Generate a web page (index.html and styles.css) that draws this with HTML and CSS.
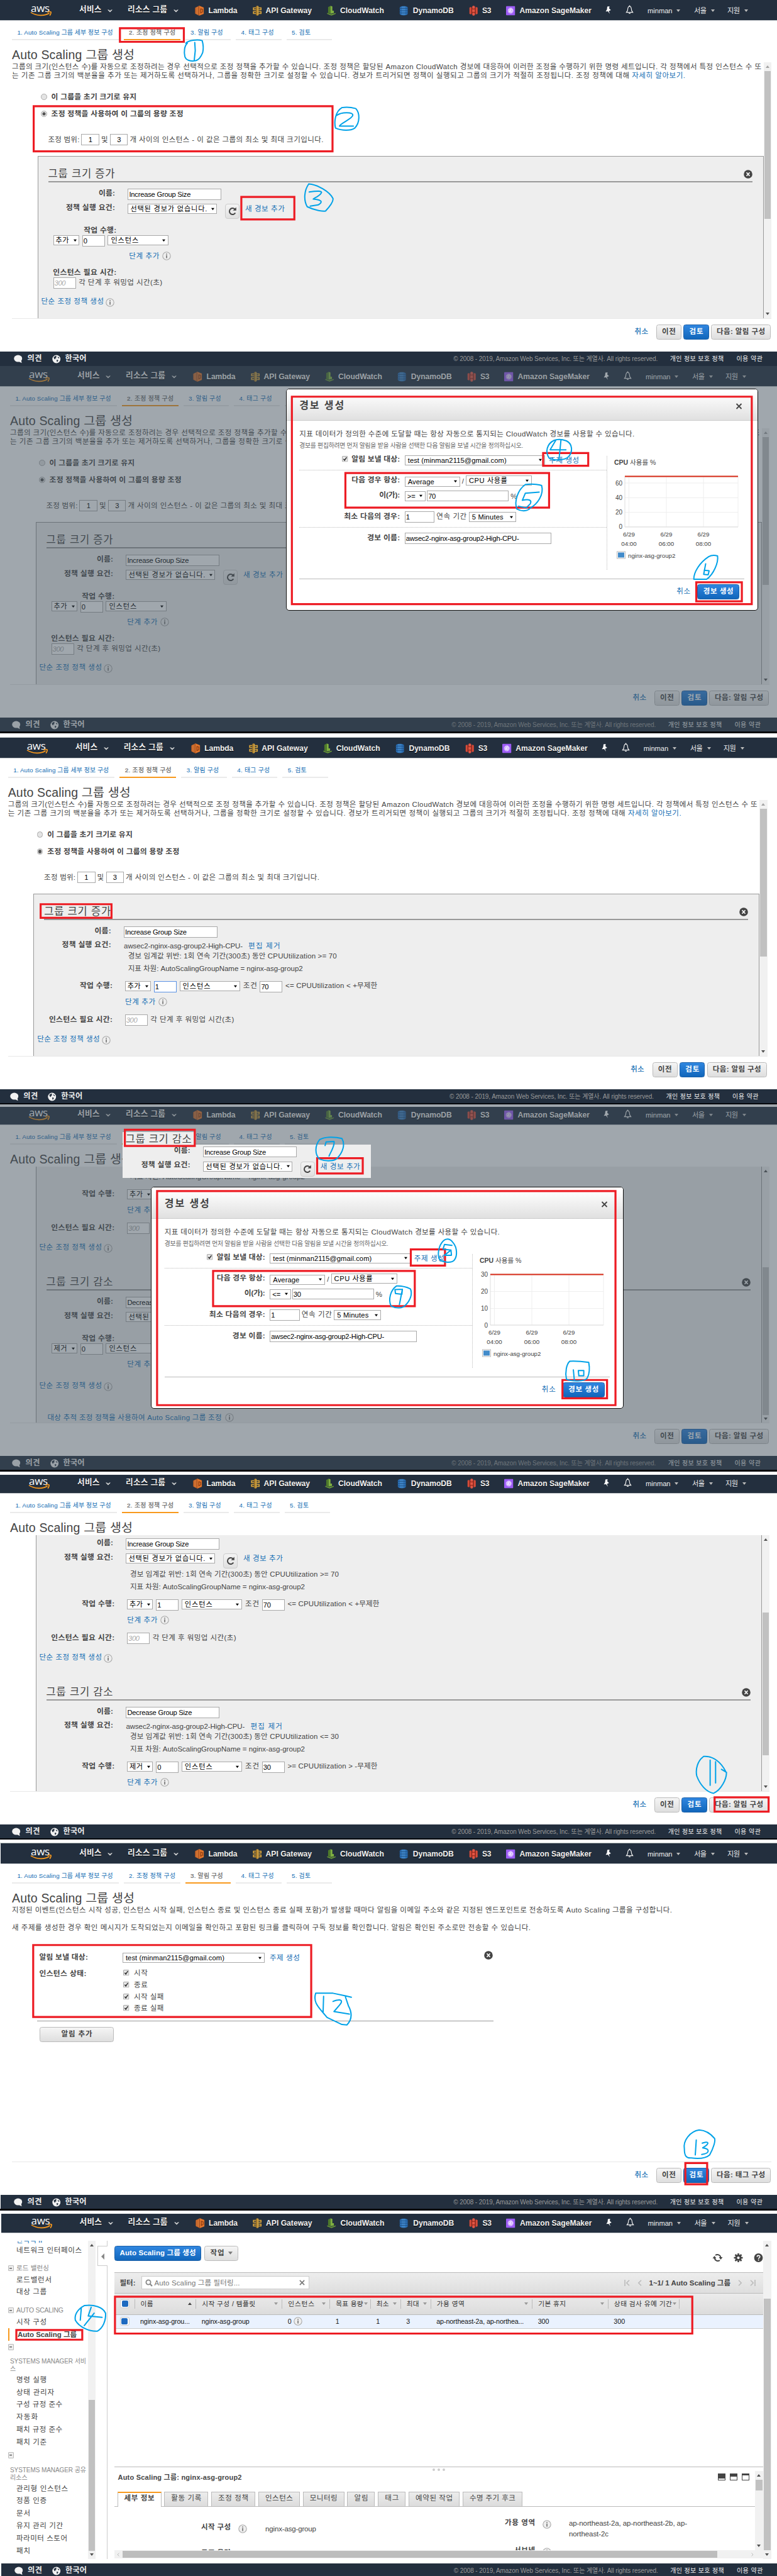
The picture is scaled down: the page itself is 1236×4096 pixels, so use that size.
FILE: index.html
```html
<!DOCTYPE html>
<html lang="ko">
<head>
<meta charset="utf-8">
<title>Auto Scaling 그룹 생성</title>
<link rel="stylesheet" href="styles.css">
</head>
<body>
<svg width="0" height="0" class="defs">
  <symbol id="i-aws" viewBox="0 0 34 20"><path d="M1 13.600c9 6 22 6.400 29.500 1.200M27 13.200c2.500-.7 5-.8 5.900-.2.600.9-.3 4-1.900 5.600" fill="none" stroke="#f8991d" stroke-width="1.700"/></symbol>
  <symbol id="i-caret" viewBox="0 0 8 5"><path d="M0 .6h2.200L4 2.300 5.800.6H8L4 4.600z" fill="#ddd"/></symbol>
  <symbol id="i-tri" viewBox="0 0 6 4"><path d="M0 0h6L3 4z" fill="currentColor"/></symbol>
  <symbol id="i-up" viewBox="0 0 6 4"><path d="M0 4h6L3 0z" fill="currentColor"/></symbol>
  <symbol id="i-lambda" viewBox="0 0 14 16"><path d="M0 3.500 6.500 0v16L0 12.500z" fill="#b85a22"/><path d="M6.500 0 14 3v10l-7.500 3z" fill="#e0742b"/><path d="M2 2.500v11M4.300 2v12.300" stroke="#f09048" stroke-width=".8"/><path d="M9 5v6.500l3-1.500V6z" fill="none" stroke="#8a3c12" stroke-width="1.200"/></symbol>
  <symbol id="i-api" viewBox="0 0 14 16"><path d="M5 1l2-1v16l-2-1z" fill="#a97a25"/><path d="M7 0l2 1v14l-2 1z" fill="#e0ac42"/><path d="M5 3.500H1v3h4M5 9.500H1v3h4M9 3.500h4v3H9M9 9.500h4v3H9" fill="none" stroke="#d9a43a" stroke-width="1.700"/></symbol>
  <symbol id="i-cw" viewBox="0 0 15 16"><path d="M2 2l4-2v13l-4-1z" fill="#4e7a2a"/><path d="M6 0l3 1v7h2.500v4L6 13z" fill="#7fb041"/><path d="M0 11.500 7 14l8-2.500-1 2L7.500 16 .8 13.500z" fill="#6b9b37"/></symbol>
  <symbol id="i-ddb" viewBox="0 0 15 16"><path d="M1 2.500C3 0 12 0 14 2.500v11c-2 3-11 3-13 0z" fill="#2b6fb5"/><path d="M4 1h6v14H4z" fill="#4f95d6" opacity=".55"/><path d="M0 4.200h15M0 8h15M0 11.800h15" stroke="#1c4a7d" stroke-width=".9"/></symbol>
  <symbol id="i-s3" viewBox="0 0 13 16"><path d="M0 3l3-1v12l-3-1zM13 3l-3-1v12l3-1z" fill="#d84b38"/><path d="M3 3l3.500 1L10 3v10l-3.500-1L3 13z" fill="#9c2d20"/><path d="M4.500 1l2-1 2.200 1v3l-2.200 1-2-1zM4.500 12l2-1 2.200 1v3l-2.200 1-2-1zM4.500 6h4v4h-4z" fill="#e25644"/></symbol>
  <symbol id="i-sm" viewBox="0 0 15 15"><rect width="15" height="15" rx="1" fill="#9d5cf5"/><circle cx="7.500" cy="7.500" r="4.800" fill="#cda9ff"/><path d="M4 6c2-3 3 1 3.500 2S10 10 11 7M5 10c1-3 3 1 4 1M8 3v4M4.500 8H7M9 5l2 1" stroke="#fff" fill="none" stroke-width=".9"/></symbol>
  <symbol id="i-pin" viewBox="0 0 9 13"><path d="M3 .5 6.500 0 6 3.500 8.800 6 5.500 7.500 7 12 4 8 .5 8.300 2.500 5z" fill="#fff"/></symbol>
  <symbol id="i-bell" viewBox="0 0 14 16"><path d="M7 1.500C3.500 2 4 6.500 3.500 9L1.500 12h11l-2-3C10 6.500 10.500 2 7 1.500z" fill="none" stroke="#eee" stroke-width="1.300"/><path d="M5.500 13h3v1.500h-3zM6.300 0h1.400v2H6.300z" fill="#eee"/></symbol>
  <symbol id="i-bubble" viewBox="0 0 14 14"><ellipse cx="7" cy="6" rx="6.800" ry="5.700" fill="#f2f2f2"/><path d="M7.500 10.500 13 13.500 12 8z" fill="#f2f2f2"/></symbol>
  <symbol id="i-globe" viewBox="0 0 14 14"><circle cx="7" cy="7" r="6.700" fill="#f2f2f2"/><path d="M2.500 3.500 6 1.500l1.500 1.200-1.200 1 .6 1.700-2 .2.300 1.800-2-1zM9 2.500l2.800 2.300-.3 1.200-2-1zM7.200 8l2.800.6-.5 2L7.800 12l-.2-2z" fill="#232f3e"/></symbol>
  <symbol id="i-info" viewBox="0 0 14 14"><circle cx="7" cy="7" r="6.200" fill="#eee" stroke="#aaa" stroke-width="1.100"/><path d="M6.300 3.200h1.500v1.500H6.300zM6.300 5.700h1.500v4.800H6.300z" fill="#666"/></symbol>
  <symbol id="i-close" viewBox="0 0 14 14"><circle cx="7" cy="7" r="6.800" fill="#444"/><path d="M4.500 4.200l5 5.600M9.500 4.200l-5 5.600" stroke="#fff" stroke-width="1.700"/></symbol>
  <symbol id="i-reload" viewBox="0 0 16 16"><path d="M12.300 10.500A5 5 0 1 1 11.500 4.500" fill="none" stroke="#444" stroke-width="2"/><path d="M13.800 1.500v5.300H8.500z" fill="#444"/></symbol>
  <symbol id="i-sync" viewBox="0 0 16 14"><path d="M4.500 3A5.500 5.500 0 0 1 13 6.500M11.500 11A5.500 5.500 0 0 1 3 7.500" fill="none" stroke="#444" stroke-width="1.900"/><path d="M10 6h6l-3 4zM0 8h6L3 4z" fill="#444"/></symbol>
  <symbol id="i-gear" viewBox="0 0 14 14"><circle cx="7" cy="7" r="3.600" fill="none" stroke="#444" stroke-width="3"/><path d="M7 0v2.500M7 11.500V14M0 7h2.500M11.500 7H14M2 2l2 2M10 10l2 2M12 2l-2 2M4 10l-2 2" stroke="#444" stroke-width="2.600"/></symbol>
  <symbol id="i-help" viewBox="0 0 14 14"><circle cx="7" cy="7" r="6.900" fill="#444"/><path d="M4.800 5.600C4.800 2.600 9.300 2.700 9.300 5.300 9.300 7 7.100 6.700 7.100 8.700M7.100 9.800v1.800" fill="none" stroke="#fff" stroke-width="1.600"/></symbol>
  <symbol id="i-check" viewBox="0 0 9 9"><rect x=".5" y=".5" width="8" height="8" rx="1" fill="#e8e8e8" stroke="#aaa"/><path d="M2.200 4.500 3.900 6.500 7 2" fill="none" stroke="#333" stroke-width="1.500"/></symbol>
  <symbol id="i-x" viewBox="0 0 10 10"><path d="M1 1l8 8M9 1L1 9" stroke="currentColor" stroke-width="1.800"/></symbol>
  <symbol id="i-search" viewBox="0 0 12 12"><circle cx="5" cy="5" r="3.600" fill="none" stroke="#888" stroke-width="1.800"/><path d="M7.500 7.500 11 11" stroke="#888" stroke-width="2.200"/></symbol>
  <symbol id="i-first" viewBox="0 0 9 10"><path d="M1 0v10M8 .8 3.800 5 8 9.200" fill="none" stroke="#bbb" stroke-width="1.600"/></symbol>
  <symbol id="i-prev" viewBox="0 0 9 10"><path d="M7 .8 2.800 5 7 9.200" fill="none" stroke="#bbb" stroke-width="1.600"/></symbol>
</svg>

<template id="nav">
  <header class="nav">
    <span class="logo"><b>aws</b><svg><use href="#i-aws"/></svg></span>
    <b class="svc" data-w="35.5">서비스</b><svg class="caret"><use href="#i-caret"/></svg>
    <b class="svc" data-w="63">리소스 그룹</b><svg class="caret"><use href="#i-caret"/></svg>
    <svg class="ico"><use href="#i-lambda"/></svg><b data-w="46">Lambda</b>
    <svg class="ico"><use href="#i-api"/></svg><b data-w="73.5">API Gateway</b>
    <svg class="ico"><use href="#i-cw"/></svg><b data-w="70">CloudWatch</b>
    <svg class="ico"><use href="#i-ddb"/></svg><b data-w="65">DynamoDB</b>
    <svg class="ico"><use href="#i-s3"/></svg><b data-w="14.5">S3</b>
    <svg class="ico"><use href="#i-sm"/></svg><b data-w="114.5">Amazon SageMaker</b>
    <svg class="pin"><use href="#i-pin"/></svg>
    <svg class="bell"><use href="#i-bell"/></svg>
    <span data-w="39.5">minman</span><svg class="tri"><use href="#i-tri"/></svg>
    <span data-w="20">서울</span><svg class="tri"><use href="#i-tri"/></svg>
    <span data-w="20">지원</span><svg class="tri"><use href="#i-tri"/></svg>
  </header>
</template>

<template id="foot">
  <footer class="foot">
    <svg><use href="#i-bubble"/></svg><b data-w="23">의견</b>
    <svg><use href="#i-globe"/></svg><b data-w="34">한국어</b>
    <span class="copy" data-w="325">© 2008 - 2019, Amazon Web Services, Inc. 또는 계열사. All rights reserved.</span>
    <span data-w="85.5">개인 정보 보호 정책</span>
    <span data-w="41.5">이용 약관</span>
  </footer>
</template>

<template id="steps">
  <nav class="steps on{{on}}">
    <a><span data-w="152">1. Auto Scaling 그룹 세부 정보 구성</span></a>
    <a><span data-w="74">2. 조정 정책 구성</span></a>
    <a><span data-w="51.5">3. 알림 구성</span></a>
    <a><span data-w="52">4. 태그 구성</span></a>
    <a><span data-w="30">5. 검토</span></a>
  </nav>
  <h1><span data-w="195">Auto Scaling 그룹 생성</span></h1>
</template>

<template id="intro">
  <p class="desc"><span data-w="1192">그룹의 크기(인스턴스 수)를 자동으로 조정하려는 경우 선택적으로 조정 정책을 추가할 수 있습니다. 조정 정책은 할당된 Amazon CloudWatch 경보에 대응하여 이러한 조정을 수행하기 위한 명령 세트입니다. 각 정책에서 특정 인스턴스 수 또</span><br><span data-w="1071">는 기존 그룹 크기의 백분율을 추가 또는 제거하도록 선택하거나, 그룹을 정확한 크기로 설정할 수 있습니다. 경보가 트리거되면 정책이 실행되고 그룹의 크기가 적절히 조정됩니다. 조정 정책에 대해 <a>자세히 알아보기.</a></span></p>
  <div class="opt"><i class="radio"></i><b data-w="135.5">이 그룹을 초기 크기로 유지</b></div>
  <div class="opt"><i class="radio on"></i><b data-w="210">조정 정책을 사용하여 이 그룹의 용량 조정</b></div>
  <div class="range"><span data-w="50">조정 범위:</span><i class="inp num">1</i><span data-w="11">및</span><i class="inp num">3</i><span data-w="308">개 사이의 인스턴스 - 이 값은 그룹의 최소 및 최대 크기입니다.</span></div>
</template>

<template id="heading"><div class="ghead"><span data-w="106">그룹 크기 {{t}}</span><svg class="close"><use href="#i-close"/></svg></div></template>
<template id="name"><div class="row name"><b class="lb"><span data-w="26">이름:</span></b><i class="inp wide"><span data-w="{{w}}">{{t}}</span></i></div></template>
<template id="alarmsel"><div class="row alarmsel"><b class="lb"><span data-w="78">정책 실행 요건:</span></b><i class="sel cond"><span data-w="122">선택된 경보가 없습니다.</span><svg><use href="#i-tri"/></svg></i><i class="rbtn"><svg><use href="#i-reload"/></svg></i><a data-w="63">새 경보 추가</a></div></template>
<template id="alarmtxt"><div class="row alarmtxt"><b class="lb"><span data-w="78">정책 실행 요건:</span></b><span data-w="189">awsec2-nginx-asg-group2-High-CPU-</span><a class="g8" data-w="22.500">편집</a><a data-w="22.500">제거</a></div></template>
<template id="viol"><div class="row viol"><span data-w="332">경보 임계값 위반: 1회 연속 기간(300초) 동안 CPUUtilization {{t}}</span></div></template>
<template id="dim"><div class="row dim"><span data-w="278">지표 차원: AutoScalingGroupName = nginx-asg-group2</span></div></template>
<template id="act"><div class="row act {{c}}"><b class="lb x2"><span data-w="52">작업 수행:</span></b><i class="sel op"><span data-w="21">{{op}}</span><svg><use href="#i-tri"/></svg></i><i class="inp n2">{{n}}</i><i class="sel unit"><span data-w="44">인스턴스</span><svg><use href="#i-tri"/></svg></i><span class="up" data-w="22">조건</span><i class="inp n2">{{v}}</i><span class="up" data-w="{{w}}">{{t}}</span></div></template>
<template id="actmin"><div class="row actlab"><b class="lb x2"><span data-w="52">작업 수행:</span></b></div><div class="row actmin"><i class="sel op"><span data-w="21">{{op}}</span><svg><use href="#i-tri"/></svg></i><i class="inp n2">0</i><i class="sel unit"><span data-w="44">인스턴스</span><svg><use href="#i-tri"/></svg></i></div></template>
<template id="step"><div class="row step {{c}}"><a data-w="48">단계 추가</a><svg class="info"><use href="#i-info"/></svg></div></template>
<template id="warm"><div class="row warm"><b class="lb x2"><span data-w="101">인스턴스 필요 시간:</span></b><i class="inp n2 ph">300</i><span class="up" data-w="133">각 단계 후 워밍업 시간(초)</span></div></template>
<template id="simple"><div class="row simple {{c}}"><a data-w="99.5">단순 조정 정책 생성</a><svg class="info"><use href="#i-info"/></svg></div></template>
<template id="bar"><div class="vbar {{c}}"><svg><use href="#i-up"/></svg><i></i><svg><use href="#i-tri"/></svg></div></template>
<template id="actions"><div class="actions"><a data-w="21.500">취소</a><i class="btn"><span data-w="22">이전</span></i><i class="btn blue"><span data-w="22">검토</span></i><i class="btn next"><span data-w="77">다음: {{t}} 구성</span></i></div></template>

<template id="wizard">
  <div data-use="nav"></div>
  <main class="body">
    <div data-use="steps" data-on="2"></div>
    <div class="pane"><div class="scroll">
      <div data-use="intro"></div>
      <div class="group">
        <div data-use="heading" data-t="증가"></div>
        <div data-use="name" data-t="Increase Group Size" data-w="98"></div>
        <div data-use="alarmsel"></div>
        <div data-use="actmin" data-op="추가"></div>
        <div data-use="step" data-c="tall"></div>
        <div class="row warmlab"><b class="lb x2"><span data-w="101">인스턴스 필요 시간:</span></b></div>
        <div class="row warmmin"><i class="inp n2 ph">300</i><span class="up" data-w="133">각 단계 후 워밍업 시간(초)</span></div>
        <div data-use="simple" data-c="tall"></div>
      </div>
    </div><div data-use="bar" data-c="top"></div></div>
    <div data-use="actions" data-t="알림"></div>
  </main>
  <div data-use="foot"></div>
</template>

<template id="dialog">
  <div class="dialog {{c}}">
    <div class="dhead"><b data-w="71">경보 생성</b><svg><use href="#i-x"/></svg></div>
    <p class="p1"><span data-w="533">지표 데이터가 정의한 수준에 도달할 때는 항상 자동으로 통지되는 CloudWatch 경보를 사용할 수 있습니다.</span></p>
    <p class="p2"><span data-w="356">경보를 편집하려면 먼저 알림을 받을 사람을 선택한 다음 알림을 보낼 시간을 정의하십시오.</span></p>
    <div class="dgrid">
      <div class="dform">
        <div class="dr d1"><b class="dl"><svg class="chk"><use href="#i-check"/></svg><span data-w="77">알림 보낼 대상:</span></b><i class="sel topic"><span data-w="157">test (minman2115@gmail.com)</span><svg><use href="#i-tri"/></svg></i><a data-w="48">주제 생성</a></div>
        <div class="dr d2"><b class="dl"><span data-w="77">다음 경우 항상:</span></b><i class="sel avg"><span data-w="42">Average</span><svg><use href="#i-tri"/></svg></i><span>/</span><i class="sel cpu"><span data-w="61">CPU 사용률</span><svg><use href="#i-tri"/></svg></i></div>
        <div class="dr d3"><b class="dl"><span data-w="33">이(가):</span></b><i class="sel cmp"><span>{{op}}</span><svg><use href="#i-tri"/></svg></i><i class="inp val">{{v}}</i><span class="pct">%</span></div>
        <div class="dr d4"><b class="dl"><span data-w="89">최소 다음의 경우:</span></b><i class="inp per">1</i><span class="up" data-w="48">연속 기간</span><i class="sel min5"><span data-w="50">5 Minutes</span><svg><use href="#i-tri"/></svg></i></div>
        <div class="dr d5"><b class="dl"><span data-w="52">경보 이름:</span></b><i class="inp aname"><span data-w="180">awsec2-nginx-asg-group2-High-CPU-</span></i></div>
      </div>
      <svg class="chart" width="218" height="180">
        <text x="11" y="14" class="ct">CPU <tspan class="ctr">사용률 %</tspan></text>
        <path d="{{grid}}M34.500 32V113M94 32V113M153 32V113M208 32V113" class="grid"/>
        <path d="M28 32V113H208" class="axis"/>
        <path d="M28 32.500H208" class="lim2"/><path d="M28 32.500H208" class="lim"/>
        {{ticks}}
        <g class="xl"><text x="34.500" y="128">6/29</text><text x="94" y="128">6/29</text><text x="153" y="128">6/29</text><text x="34.500" y="143">04:00</text><text x="94" y="143">06:00</text><text x="153" y="143">08:00</text></g>
        <rect x="15.500" y="152" width="13" height="11" fill="#fff" stroke="#bbb"/><rect x="17" y="153.500" width="10" height="8" fill="#428bca"/>
        <text x="33" y="161.500" class="lg">nginx-asg-group2</text>
      </svg>
    </div>
    <div class="dfoot"><a data-w="22">취소</a><i class="btn blue"><span data-w="48">경보 생성</span></i></div>
  </div>
</template>

<section class="shot s1"><div data-use="wizard"></div></section>

<section class="shot s2">
  <div data-use="wizard"></div>
  <div class="shade"></div>
  <div data-use="dialog" data-c="d-right" data-op="&gt;=" data-v="70" data-ticks="60:43,40:66.5,20:89.5,0:112.5"></div>
</section>
<div class="strip st2"></div>

<section class="shot s3">
  <div data-use="nav"></div>
  <main class="body">
    <div data-use="steps" data-on="2"></div>
    <div class="pane"><div class="scroll">
      <div data-use="intro"></div>
      <div class="group">
        <div data-use="heading" data-t="증가"></div>
        <div data-use="name" data-t="Increase Group Size" data-w="98"></div>
        <div data-use="alarmtxt"></div>
        <div data-use="viol" data-t="&gt;= 70"></div>
        <div data-use="dim"></div>
        <div data-use="act" data-c="focus" data-op="추가" data-n="1" data-v="70" data-t="&lt;= CPUUtilization &lt; +무제한" data-w="146"></div>
        <div data-use="step"></div>
        <div data-use="warm"></div>
        <div data-use="simple"></div>
      </div>
    </div><div data-use="bar" data-c="top"></div></div>
    <div data-use="actions" data-t="알림"></div>
  </main>
  <div data-use="foot"></div>
</section>
<div class="strip st3"></div>

<section class="shot s4">
  <div data-use="nav"></div>
  <main class="body">
    <div data-use="steps" data-on="2"></div>
    <div class="pane"><div class="scroll">
      <div class="group cut">
        <div data-use="dim"></div>
        <div data-use="act" data-op="추가" data-n="1" data-v="70" data-t="&lt;= CPUUtilization &lt; +무제한" data-w="146"></div>
        <div data-use="step"></div>
        <div data-use="warm"></div>
        <div data-use="simple"></div>
        <div data-use="heading" data-t="감소"></div>
        <div data-use="name" data-t="Decrease Group Size" data-w="104"></div>
        <div data-use="alarmsel"></div>
        <div data-use="actmin" data-op="제거"></div>
        <div data-use="step" data-c="tall"></div>
        <div data-use="simple" data-c="mid"></div>
        <div class="row target"><a data-w="277">대상 추적 조정 정책을 사용하여 Auto Scaling 그룹 조정</a><svg class="info"><use href="#i-info"/></svg></div>
      </div>
    </div><div data-use="bar" data-c="low"></div></div>
    <div data-use="actions" data-t="알림"></div>
  </main>
  <div data-use="foot"></div>
  <div class="shade"></div>
  <div class="patch">
    <div class="phead"><span data-w="105">그룹 크기 감소</span></div>
    <div class="pbody">
      <div data-use="name" data-t="Increase Group Size" data-w="98"></div>
      <div data-use="alarmsel"></div>
    </div>
  </div>
  <div data-use="dialog" data-c="d-mid" data-op="&lt;=" data-v="30" data-ticks="30:32.5,20:59.5,10:86.5,0:113"></div>
</section>
<div class="strip st4"></div>

<section class="shot s5">
  <div data-use="nav"></div>
  <main class="body">
    <div data-use="steps" data-on="2"></div>
    <div class="pane"><div class="scroll">
      <div class="group cut">
        <div data-use="name" data-t="Increase Group Size" data-w="98"></div>
        <div data-use="alarmsel"></div>
        <div data-use="viol" data-t="&gt;= 70"></div>
        <div data-use="dim"></div>
        <div data-use="act" data-op="추가" data-n="1" data-v="70" data-t="&lt;= CPUUtilization &lt; +무제한" data-w="146"></div>
        <div data-use="step"></div>
        <div data-use="warm"></div>
        <div data-use="simple"></div>
        <div data-use="heading" data-t="감소"></div>
        <div data-use="name" data-t="Decrease Group Size" data-w="103"></div>
        <div data-use="alarmtxt"></div>
        <div data-use="viol" data-t="&lt;= 30"></div>
        <div data-use="dim"></div>
        <div data-use="act" data-op="제거" data-n="0" data-v="30" data-t="&gt;= CPUUtilization &gt; -무제한" data-w="143"></div>
        <div data-use="step"></div>
      </div>
    </div><div data-use="bar" data-c="center"></div></div>
    <div data-use="actions" data-t="알림"></div>
  </main>
  <div data-use="foot"></div>
</section>
<div class="strip st5"></div>

<section class="shot s6">
  <div data-use="nav"></div>
  <main class="body">
    <div data-use="steps" data-on="3"></div>
    <div class="pane notify">
      <p class="desc"><span data-w="1050">지정된 이벤트(인스턴스 시작 성공, 인스턴스 시작 실패, 인스턴스 종료 및 인스턴스 종료 실패 포함)가 발생할 때마다 알림을 이메일 주소와 같은 지정된 엔드포인트로 전송하도록 Auto Scaling 그룹을 구성합니다.</span></p>
      <p class="desc"><span data-w="825">새 주제를 생성한 경우 확인 메시지가 도착되었는지 이메일을 확인하고 포함된 링크를 클릭하여 구독 정보를 확인합니다. 알림은 확인된 주소로만 전송할 수 있습니다.</span></p>
      <div class="nform">
        <b class="nl"><span data-w="77.500">알림 보낼 대상:</span></b>
        <div class="nsel"><i class="sel topic2"><span data-w="157">test (minman2115@gmail.com)</span><svg><use href="#i-tri"/></svg></i><a data-w="48">주제 생성</a><svg class="close"><use href="#i-close"/></svg></div>
        <b class="nl"><span data-w="75">인스턴스 상태:</span></b>
        <ul>
          <li><svg class="chk"><use href="#i-check"/></svg><span data-w="22">시작</span></li>
          <li><svg class="chk"><use href="#i-check"/></svg><span data-w="22">종료</span></li>
          <li><svg class="chk"><use href="#i-check"/></svg><span data-w="47.500">시작 실패</span></li>
          <li><svg class="chk"><use href="#i-check"/></svg><span data-w="47.500">종료 실패</span></li>
        </ul>
      </div>
      <i class="btn add"><span data-w="49">알림 추가</span></i>
    </div>
    <div data-use="actions" data-t="태그"></div>
  </main>
  <div data-use="foot"></div>
</section>
<div class="strip st6"></div>

<section class="shot s7">
  <div data-use="nav"></div>
  <main class="body console">
    <aside>
      <ul class="menu">
        <li class="scrap">탄력적 IP</li>
        <li><span data-w="104">네트워크 인터페이스</span></li>
        <li class="cat c1"><i></i><span data-w="52">로드 밸런싱</span></li>
        <li><span data-w="56">로드밸런서</span></li>
        <li><span data-w="48">대상 그룹</span></li>
        <li class="cat c2"><i></i><span data-w="75">AUTO SCALING</span></li>
        <li><span data-w="48">시작 구성</span></li>
        <li class="cur"><b data-w="94">Auto Scaling 그룹</b></li>
        <li class="cat c3"><i></i></li>
        <li class="sys"><span data-w="121">SYSTEMS MANAGER 서비</span><br>스</li>
        <li><span data-w="48">명령 실행</span></li>
        <li><span data-w="60">상태 관리자</span></li>
        <li><span data-w="73">구성 규정 준수</span></li>
        <li><span data-w="34">자동화</span></li>
        <li><span data-w="73">패치 규정 준수</span></li>
        <li><span data-w="48">패치 기준</span></li>
        <li class="cat c4"><i></i></li>
        <li class="sys"><span data-w="121">SYSTEMS MANAGER 공유</span><br>리소스</li>
        <li><span data-w="82">관리형 인스턴스</span></li>
        <li><span data-w="48">정품 인증</span></li>
        <li><span data-w="22">문서</span></li>
        <li><span data-w="74">유지 관리 기간</span></li>
        <li><span data-w="81">파라미터 스토어</span></li>
        <li><span data-w="22">패치</span></li>
      </ul>
      <div data-use="bar" data-c="side"></div>
      <div class="fold"><i></i></div>
    </aside>
    <div class="content">
      <div class="tools">
        <i class="btn blue"><span data-w="121">Auto Scaling 그룹 생성</span></i>
        <i class="btn"><span data-w="22">작업</span><svg class="caretd"><use href="#i-tri"/></svg></i>
        <svg class="t1"><use href="#i-sync"/></svg><svg><use href="#i-gear"/></svg><svg><use href="#i-help"/></svg>
      </div>
      <div class="filter">
        <b data-w="25">필터:</b>
        <span class="search"><svg><use href="#i-search"/></svg><span data-w="136">Auto Scaling 그룹 필터링...</span><svg class="xx"><use href="#i-x"/></svg></span>
        <svg class="pg f"><use href="#i-first"/></svg><svg class="pg"><use href="#i-prev"/></svg>
        <b data-w="129.500">1~1/ 1 Auto Scaling 그룹</b>
        <svg class="pg r"><use href="#i-prev"/></svg><svg class="pg r"><use href="#i-first"/></svg>
      </div>
      <div class="tr th">
        <span><i class="cb"></i></span>
        <span><em data-w="20">이름</em><svg><use href="#i-up"/></svg></span>
        <span><em data-w="85">시작 구성 / 템플릿</em><svg><use href="#i-tri"/></svg></span>
        <span><em data-w="42">인스턴스</em><svg><use href="#i-tri"/></svg></span>
        <span><em data-w="43.500">목표 용량</em><svg><use href="#i-tri"/></svg></span>
        <span><em data-w="20">최소</em><svg><use href="#i-tri"/></svg></span>
        <span><em data-w="20">최대</em><svg><use href="#i-tri"/></svg></span>
        <span><em data-w="44">가용 영역</em><svg><use href="#i-tri"/></svg></span>
        <span><em data-w="44">기본 휴지</em><svg><use href="#i-tri"/></svg></span>
        <span><em data-w="92">상태 검사 유예 기간</em><svg><use href="#i-tri"/></svg></span>
        <span></span>
      </div>
      <div class="tr td">
        <span><i class="cb"></i></span>
        <span><em data-w="79">nginx-asg-grou...</em></span>
        <span><em data-w="76">nginx-asg-group</em></span>
        <span><em>0</em><svg class="info"><use href="#i-info"/></svg></span>
        <span><em>1</em></span><span><em>1</em></span><span><em>3</em></span>
        <span><em data-w="139">ap-northeast-2a, ap-northea...</em></span>
        <span><em>300</em></span><span><em>300</em></span><span></span>
      </div>
      <div class="detail">
        <div class="grip"><i></i><i></i><i></i></div>
        <div class="dmain">
          <div class="dcol">
            <div class="dtitle"><b data-w="197">Auto Scaling 그룹: nginx-asg-group2</b><i class="w1"></i><i class="w2"></i><i class="w3"></i></div>
            <div class="tabs"><span class="on"><b data-w="48">세부 정보</b></span><span><em data-w="48">활동 기록</em></span><span><em data-w="48">조정 정책</em></span><span><em data-w="44">인스턴스</em></span><span><em data-w="44">모니터링</em></span><span><em data-w="22">알림</em></span><span><em data-w="22">태그</em></span><span><em data-w="59">예약된 작업</em></span><span><em data-w="73">수명 주기 후크</em></span></div>
            <div class="info-grid">
              <div class="ig l"><b data-w="47">시작 구성</b><svg class="info"><use href="#i-info"/></svg><span data-w="81">nginx-asg-group</span></div>
              <div class="ig r"><b data-w="48">가용 영역</b><svg class="info"><use href="#i-info"/></svg><span class="az"><span data-w="188">ap-northeast-2a, ap-northeast-2b, ap-</span><br><span data-w="63">northeast-2c</span></span></div>
              <div class="ig l2"><b data-w="47">목표 용량</b><svg class="info"><use href="#i-info"/></svg></div>
              <div class="ig r2"><b data-w="33">서브넷</b><svg class="info"><use href="#i-info"/></svg></div>
            </div>
          </div>
          <div data-use="bar" data-c="inner"></div>
        </div>
        <div class="hbar"><svg><use href="#i-prev"/></svg><i></i><svg class="hr"><use href="#i-prev"/></svg></div>
      </div>
    </div>
    <div data-use="bar" data-c="outer"></div>
  </main>
  <div data-use="foot"></div>
</section>

<svg class="marks" width="1236" height="4096" viewBox="0 0 1236 4096">
  <g transform="scale(.7883 .3736)">
    <path class="bx" d="M242 120H371V178H242zM68 452H671V644H68zM487 838H594V934H487z"/>
    <path class="pen" d="M375 184C380 172 398 166 408 173 411 195 410 215 409 224 405 245 401 256 395 258 385 262 375 257 373 240 371 220 372 195 378 184M393 181 394 215 392 256"/>
    <path class="pen" d="M690 458C676 475 674 520 677 545 690 557 708 557 716 545 727 520 726 480 718 462 705 454 695 456 690 458M679 492C690 475 712 478 712 490 712 505 686 525 685 537L713 537"/>
    <path class="pen" d="M623 783C614 810 612 850 620 880 635 895 650 900 657 898 665 880 673 860 672 845 665 815 640 785 623 783M624 817C640 812 652 812 648 822 645 835 632 845 632 847 650 850 652 860 642 872L626 877"/>
  </g>
  <g transform="translate(0 580.7) scale(.7883 .3736)">
    <path class="bx" d="M589 134H1517V1017H589zM1096 374H1187V428H1096zM697 459H1108V606H697zM1405 924H1497V1005H1405z"/>
    <path class="pen" d="M1118 320C1103 335 1100 370 1108 395 1120 408 1140 405 1147 390 1156 370 1156 335 1143 322 1135 316 1125 314 1118 320M1122 318 1110 360H1142M1132 318 1128 402"/>
    <path class="pen" d="M1060 508C1045 530 1037 580 1043 612 1055 625 1065 620 1070 608 1085 590 1098 550 1093 512 1085 506 1070 505 1060 508M1088 540 1060 545 1054 575C1068 568 1074 575 1070 590L1062 607 1046 600"/>
    <path class="pen" d="M1430 815C1412 840 1400 880 1400 911L1426 911C1440 890 1450 840 1448 812 1440 806 1434 810 1430 815M1424 845 1420 890 1429 892 1431 875 1421 873"/>
  </g>
  <g transform="translate(0 1166.500) scale(.7883 .3736)"><path class="bx" d="M82 726H225V784H82z"/></g>
  <g transform="translate(0 1752.300) scale(.7883 .3736)">
    <path class="bx" d="M252 118H393V187H252zM640 239H732V304H640zM317 379H1242V1290H317zM829 627H898V696H829zM430 719H837V869H430zM1135 1183H1225V1261H1135z"/>
    <path class="pen" d="M645 160C635 185 635 225 645 243 660 255 675 250 680 240 692 215 697 180 690 155 675 147 655 147 645 160M656 185 658 170 674 168C676 185 668 210 664 230"/>
    <path class="pen" d="M895 590C885 610 882 650 887 670 895 685 912 686 917 672 923 655 923 620 914 598 908 580 900 580 895 590M912 610 897 606 894 626 910 630 911 652 897 652 910 630"/>
    <path class="pen" d="M800 783C788 800 783 840 789 868 800 880 812 878 818 865 828 845 833 815 828 795 818 785 810 782 800 783M812 797 797 798 798 815 811 818 812 797 806 862"/>
    <path class="pen" d="M1150 1103C1143 1115 1140 1150 1143 1180 1155 1190 1180 1190 1185 1175 1190 1155 1190 1130 1188 1108 1175 1104 1160 1102 1150 1103M1157 1140 1159 1185M1167 1143H1178V1165H1168z"/>
  </g>
  <g transform="translate(0 2338.100) scale(.7883 .3736)">
    <path class="bx" d="M1442 1391H1551V1452H1442z"/>
    <path class="pen" d="M1420 1217C1408 1235 1403 1270 1406 1300 1412 1335 1425 1370 1440 1374 1455 1360 1466 1315 1466 1285L1456 1272M1464 1280C1456 1245 1440 1214 1420 1217M1433 1233V1340M1444 1240V1330"/>
  </g>
  <g transform="translate(0 2923.900) scale(.7883 .3736)">
    <path class="bx" d="M67 452H628V758H67zM1383 1380H1427V1470H1383z"/>
    <path class="pen" d="M709 674 697 668 672 657H637C632 690 640 710 650 735L660 760 690 790 700 792C710 770 712 745 703 710L697 672M653 670 652 737M672 692C690 678 692 690 686 705L674 735 705 746"/>
    <path class="pen" d="M1411 1239C1392 1245 1378 1285 1381 1320 1381 1350 1385 1360 1395 1358 1410 1362 1424 1360 1432 1345 1440 1315 1444 1285 1442 1275 1430 1245 1420 1240 1411 1239M1405 1282 1403 1345M1417 1295C1430 1285 1434 1295 1418 1315 1434 1318 1432 1340 1416 1343"/>
  </g>
  <g transform="translate(0 3509.900) scale(.7883 .3736)">
    <path class="bx" d="M232 380H1397V537H232zM33 522H166V563H33z"/>
    <path class="pen" d="M170 418C155 435 150 460 152 480 160 510 180 528 196 527 208 515 214 480 213 450 208 425 190 412 170 418M164 430 162 480M184 425 178 462 206 468M190 450 170 503"/>
  </g>
</svg>
<script src="app.js"></script>
</body>
</html>
```
FILE: styles.css
```css
* { box-sizing: border-box; margin: 0; padding: 0; }
html, body { width: 1236px; height: 4096px; overflow: hidden; background: #fff; }
body { position: relative; font: 11.500px/14px "Liberation Sans", "Noto Sans CJK KR", sans-serif; color: #444; }
i, em { font-style: normal; }
a { color: #146eb4; }
ul { list-style: none; }
svg { display: block; flex: none; overflow: visible; }
.defs { position: absolute; }
[data-w] { display: inline-block; white-space: nowrap; flex: none; justify-self: start; }

/* frames */
.shot { position: relative; width: 1236px; height: 582px; overflow: hidden; --dx: 0px; }
.s2, .s4, .s5 { --dx: -3px; }
.s3 { --dx: -6.3px; }
.s2, .s3, .s4, .s5 { height: 581px; }
.s6 { height: 581px; border-left: 1.500px solid #fff; --dx: -1px; }
.s7 { height: 578px; border-left: 2px solid #fff; --dx: -1.500px; }
.strip { position: relative; width: 1236px; background: #05070b; }
.st2 { height: 10px; background: linear-gradient(#05070b 3px, #fff 3px, #fff 9px, #c9cfcf 9px); }
.st3 { height: 2px; }
.st4 { height: 5px; background: linear-gradient(#05070b 3px, #fff 3px); }
.st5 { height: 8px; background: linear-gradient(#05070b 2px, #fff 2px, #fff 7px, #b9c2c0 7px); }
.st6 { height: 6px; background: linear-gradient(#05070b 3px, #fff 3px); }
.shade { position: absolute; inset: 0; background: rgba(65,79,91,.5); }

.nav { height: 33px; background: #232f3e; border-bottom: 1px solid #c5c9cd; display: grid; align-items: center; color: #eee; white-space: nowrap;
  grid-template-columns: 78px 45px 32px 73px 34px 21.600px 70.400px 20.600px 97.400px 21px 94px 21.800px 89.200px 21px 38px 21.500px 136.800px 31px 35.800px 45px 29px 26px 27px 26px 20px;
  padding-left: calc(48px + var(--dx)); font-size: 12.100px; }
.s4 .nav { box-shadow: inset 0 4px #fff; }
.s5 .nav { box-shadow: inset 0 3px #fff; }
.s7 .nav { box-shadow: inset 0 2px #fff; }
.nav > b { color: #f2f2f2; text-shadow: 0 1px #000; padding-top: 2px; }
.nav > b.svc { font-size: 12.700px; padding: 0 0 3px; }
.nav > span[data-w] { font-size: 11.200px; padding-top: 2px; }
.nav .logo { position: relative; height: 22px; }
.logo b { display: block; font: 400 17px/15px "Open Sans", sans-serif; color: #fff; letter-spacing: -.3px; padding-left: 1px; }
.logo svg { position: absolute; left: 0; top: 1px; width: 34px; height: 20px; }
.nav .caret { width: 8px; height: 5px; margin-top: 2px; }
.nav .ico { width: 14.500px; height: 16px; margin-top: 1px; }
.nav .pin { width: 9px; height: 13px; }
.nav .bell { width: 13px; height: 16px; margin-left: 1px; }
.nav .tri { width: 6px; height: 4px; color: #bbb; margin: 2px 0 0 1px; }

.body { height: 526px; padding-left: calc(19px + var(--dx)); width: 1236px; }
.foot { height: 23px; background: #232f3e; display: grid; align-items: center; color: #eee;
  grid-template-columns: 21.500px 39px 21px 617.800px 344.500px 105.600px 50px; padding-left: calc(22px + var(--dx)); font-size: 10px; white-space: nowrap; }
.foot svg { width: 13.500px; height: 14px; }
.foot b { font-size: 12.200px; padding-bottom: 2px; }
.foot .copy { color: #999; }

/* wizard */
.steps { display: flex; gap: 8px; padding-top: 9px; height: 31.500px; font-size: 9.900px; }
.steps a { height: 21.500px; border-bottom: 2px solid #eaeaea; padding: 2.500px 0 0 8.500px; width: 72.500px; }
.steps a:nth-child(1) { width: 169.500px; }
.steps a:nth-child(2) { width: 90px; }
.on2 a:nth-child(2), .on3 a:nth-child(3) { border-color: #f8991d; color: #666; -webkit-text-stroke: .2px #666; }
h1 { font-weight: 400; font-size: 19.500px; line-height: 28px; height: 34.500px; padding-top: 8.500px; }
.pane { height: 408px; width: 1208px; display: flex; border-bottom: 1px solid #e8e8e8; overflow: hidden; }
.scroll { width: 1195.500px; overflow: hidden; flex: none; }
.desc { line-height: 14.200px; height: 43.500px; white-space: nowrap; margin-right: -20px; }
.opt { display: flex; align-items: center; height: 27px; padding: 0 0 4px 46px; gap: 7px; font-size: 11.800px; }
.radio { width: 9.600px; height: 9.600px; border-radius: 50%; border: 1px solid #aaa; background: #e4e4e4; flex: none; }
.radio.on { background: radial-gradient(#555 0 2.300px, #e4e4e4 2.800px); }
.range { display: flex; align-items: center; height: 37px; padding-left: 57.400px; gap: 3px; margin-top: 7px; margin-bottom: 7.500px; }
.inp, .sel { display: flex; align-items: center; background: #fff; border: 1px solid #a9a9a9; color: #000; flex: none; height: 17.500px; padding: 0 1px; white-space: nowrap; font-size: 11.200px; letter-spacing: -.3px; }
.sel { height: 16px; justify-content: space-between; padding: 0 4px; }
.inp span, .sel span { letter-spacing: 0; }
.sel svg { width: 5px; height: 5px; }
.num { width: 28.500px; justify-content: center; }
.group { margin-left: 40.500px; background: #eee; border: 1px solid #999; padding: 15px 17px 40px 16px; height: 300px; }
.group.cut { border-top: 0; padding-top: 3px; height: 420px; }
.ghead { height: 26px; border-bottom: 2px solid #999; display: flex; align-items: center; justify-content: space-between; font-size: 16.500px; margin-bottom: 8px; }
.cut .ghead { margin-top: 33px; }
.close { width: 14px; height: 14px; }
.ghead .close { margin-top: 2px; }
.row { display: flex; align-items: center; white-space: nowrap; }
.lb { width: 106.400px; margin-right: 20.500px; display: flex; justify-content: flex-end; padding-bottom: 5px; flex: none; font-size: 11.800px; }
.lb.x2 { width: 108.700px; margin-right: 19.800px; padding-bottom: 3px; }
.name { height: 22px; }
.wide { width: 148.500px; }
.alarmsel { height: 24px; }
.cond { width: 141.500px; padding: 0 3px; }
.rbtn { width: 23.500px; height: 24px; margin: 8px 8.500px 0 13px; border: 1px solid #ccc; border-radius: 4px; background: linear-gradient(#f4f4f4, #e0e0e0); display: grid; place-items: center; flex: none; }
.rbtn svg { width: 16px; height: 16px; }
.alarmtxt { height: 18px; margin-top: 2px; }
.alarmtxt .g8 { margin: 0 5.500px 0 9px; }
.alarmsel + .viol { margin-top: 6px; }
.viol { height: 14px; padding-left: 133.500px; }
.dim { height: 25px; padding-left: 133.500px; }
.act { height: 32px; gap: 4.700px; }
.act .lb, .warm .lb { margin-right: 15.100px; }
.act .inp, .actmin .inp { margin-top: 1.500px; }
.op { width: 41.500px; padding: 0 3px; }
.n2 { width: 36px; }
.unit { width: 96.500px; }
.up { padding-bottom: 3px; }
.focus .inp:nth-of-type(2) { border: 1.500px solid #5b92e5; }
.step { height: 18px; padding-left: 128.800px; gap: 5px; }
.step.tall { height: 34px; }
.info { width: 14px; height: 14px; }
.warm { height: 40px; gap: 4.700px; }
.ph { color: #aaa; font-style: italic; }
.simple { height: 20px; margin-left: -11px; gap: 3px; }
.simple .info { margin-top: 4px; }
.simple.tall { height: 40px; }
.simple.mid { height: 34px; }
.actlab { height: 17px; margin-top: 13px; }
.actlab .lb, .warmlab .lb { padding-bottom: 0; }
.actmin { height: 16px; padding-left: 8px; gap: 4.700px; }
.warmlab { height: 17px; }
.warmmin { height: 18px; padding-left: 8px; gap: 4.700px; }
.target { height: 20px; margin-top: 24px; padding-left: 2px; gap: 5px; }

.vbar { width: 12.500px; background: #f1f1f1; display: grid; justify-items: center; align-items: center; grid-template-rows: 13.500px 1fr 13.500px; flex: none; color: #505050; }
.vbar svg { width: 6px; height: 4px; }
.vbar i { width: 10.500px; background: #c1c1c1; align-self: start; height: 235px; }
.vbar.top svg:first-child { color: #a3a3a3; }
.vbar.low i { margin-top: 146px; }
.vbar.center i { height: 227px; margin-top: 109px; }

.actions { display: flex; align-items: center; padding-top: 9px; justify-content: flex-end; width: 1207px; gap: 3.300px; }
.actions a { margin-right: 9.500px; padding-bottom: 2px; -webkit-text-stroke: .2px #146eb4; }
.btn { height: 24px; border: 1px solid #bbb; border-radius: 3.500px; background: linear-gradient(#f5f5f5, #dedede); display: inline-flex; align-items: center; justify-content: center; font-weight: 700; color: #444; padding-bottom: 2px; width: 40.300px; flex: none; font-size: 11.500px; white-space: nowrap; }
.btn.blue { color: #fff; border-color: #1a5fa8; background: linear-gradient(#2f86e0, #1166bb); }
.btn.next { width: 95px; }

/* dialog */
.dialog { position: absolute; width: 751.500px; height: 352.500px; background: #fff; border: 1px solid #111; border-radius: 5px; overflow: hidden; }
.d-right { left: 454.700px; top: 36.200px; }
.d-mid { left: 240.300px; top: 131.200px; }
.dhead { height: 49.500px; background: linear-gradient(#fff 10%, #e0e0e0); border-bottom: 1px solid #ccc; display: flex; align-items: center; justify-content: space-between; padding: 3px 24px 0 20.500px; font-size: 16px; }
.dhead svg { width: 11px; height: 10px; margin-top: 3px; }
.p1 { padding: 14.500px 0 0 20.500px; height: 31px; }
.p2 { padding: 2px 0 0 20.500px; height: 17px; font-size: 9.800px; color: #666; }
.dgrid { display: flex; margin: 8px 0 0 20.500px; height: 181px; }
.dform { width: 490px; border-right: 1px dotted #bbb; }
.dr { display: flex; align-items: center; height: 24px; white-space: nowrap; }
.dl { width: 160px; display: flex; align-items: center; justify-content: flex-end; padding-bottom: 3px; margin-right: 7.500px; flex: none; font-size: 11.800px; }
.chk { width: 9.500px; height: 9.500px; }
.dl .chk { margin-right: 6px; }
.d1 { height: 23px; border-bottom: 1px dotted #bbb; padding-bottom: 8px; margin-bottom: 5px; }
.topic { width: 223.500px; margin-right: 6px; }
.avg { width: 88px; margin: 2px 3px 0 0; }
.cpu { width: 105px; margin-left: 3px; margin-top: -1px; }
.cmp { width: 33.500px; padding: 0 4px 0 3px; margin-right: 2px; }
.val { width: 130px; }
.pct { margin-left: 3px; }
.d4 { height: 38px; padding-top: 6px; border-bottom: 1px dotted #bbb; }
.per { width: 47.500px; margin-right: 3px; }
.min5 { width: 75px; margin-left: 3.500px; }
.d5 { height: 35px; }
.aname { width: 233.500px; }
.chart text { font: 11px "Liberation Sans", "Noto Sans CJK KR", sans-serif; fill: #444; }
.chart .ct { font-weight: 700; font-size: 10.500px; }
.chart .ctr { font-weight: 400; }
.chart text.yl { font-size: 10px; text-anchor: end; }
.chart .xl text { font-size: 9.800px; text-anchor: middle; }
.chart text.lg { font-size: 9.700px; }
.chart .grid { stroke: #eee; fill: none; }
.chart .axis { stroke: #ddd; fill: none; }
.chart .lim2 { stroke: #e7b5a5; stroke-width: 3; }
.chart .lim { stroke: #d9281c; stroke-width: 1.500; }
.dfoot { margin: 14px 21px 0 20.500px; border-top: 1px solid #bbb; display: flex; justify-content: flex-end; align-items: center; gap: 11px; padding: 8px 8px 0 0; }
.dfoot .btn { width: 67px; }
.dfoot a { padding-bottom: 2px; }

.patch { position: absolute; left: 194.700px; top: 43.700px; width: 395px; height: 73px; }
.phead { width: 115px; height: 20px; background: #eee; font-size: 16.500px; line-height: 22px; padding-left: 5px; }
.pbody { background: #eee; height: 53px; padding-top: 1px; }
.pbody .lb { width: 108px; }
.patch .phead span { position: relative; z-index: 1; }

/* notification step */
.notify { display: block; }
.notify .desc { height: 28.400px; }
.nform { display: grid; grid-template-columns: 132.500px 593px; grid-template-rows: 26px 1fr; height: 113.400px; margin: 14px 0 9px 40px; padding-left: 3.400px; border-bottom: 1px solid #999; width: 726px; }
.nl { padding-top: 4px; font-size: 11.800px; }
.nsel { display: flex; align-items: center; height: 25px; }
.topic2 { width: 226px; margin-right: 8px; }
.nsel .close { margin: -8px 0 0 293.500px; }
.nform ul { padding: 1px 0 0 1.500px; }
.nform li { display: flex; align-items: center; gap: 7px; height: 18.700px; }
.add { width: 118px; margin-left: 44px; }

/* console */
.console { display: flex; padding: 12px 0 0 0; height: 525px; margin-left: -2px; }
aside { display: flex; width: 171px; height: 505.500px; overflow: hidden; flex: none; }
.menu { width: 140px; }
.menu li { height: 19.800px; padding-left: 26px; display: flex; align-items: center; position: relative; white-space: nowrap; }
.menu li.scrap { height: 5px; line-height: 5px; overflow: hidden; align-items: flex-end; padding-bottom: 3px; color: #146eb4; }
.menu li.cat { color: #888; gap: 4px; padding-left: 12.500px; font-size: 10.500px; }
.cat i { width: 9.500px; height: 9.500px; border: 1px solid #bbb; background: linear-gradient(#666,#666) center/4px 1.500px no-repeat #eee; border-radius: 1px; }
.menu .c1 { margin-top: 10px; height: 17px; }
.menu .c2 { margin-top: 10px; height: 18px; }
.menu .c3 { height: 20px; }
.menu .c4 { height: 22px; }
.menu .sys { display: block; height: 32px; padding: 7px 0 0 16px; color: #888; font-size: 10px; line-height: 12px; }
.menu .cur { border-left: 2px solid #f8991d; margin-left: 12.500px; padding-left: 13.500px; }
.side i { height: 240px; margin-top: 239px; }
.fold { width: 19px; border-right: 1px solid #ccc; position: relative; }
.fold i { position: absolute; left: 2.500px; top: 8px; width: 17px; height: 32px; background: #fff; border: 1px solid #ccc; border-right: 0; }
.fold i::after { content: ""; position: absolute; left: 5px; top: 11px; border: 5px solid transparent; border-right-color: #888; border-left: 0; }
.content { margin-left: 11px; width: 1032px; }
.tools { display: flex; padding-top: 8px; height: 49.500px; gap: 5px; align-items: flex-start; }
.tools .btn { width: 54px; gap: 6px; }
.tools .btn.blue { width: 138px; }
.caretd { color: #777; }
.tools svg { width: 15px; height: 14px; margin: 12px 0 0 12px; }
.tools .btn svg { margin: 0; width: 7px; height: 5px; }
.tools svg.t1 { margin-left: auto; width: 17px; }
.filter { height: 34px; background: linear-gradient(#ededed, #dedede); border: 1px solid #bbb; border-width: 1px 0; display: flex; align-items: center; padding: 0 12px 0 8.500px; }
.search { width: 267px; height: 21px; background: #fff; border: 1px solid #ccc; margin: 0 auto 0 9px; display: flex; align-items: center; gap: 3px; color: #777; padding: 0 6px 0 5px; }
.search svg { width: 12px; height: 12px; }
.search .xx { margin-left: auto; width: 9px; height: 9px; }
.pg { width: 9px; height: 10px; margin-right: 11px; }
.pg.r { transform: scaleX(-1); margin: 0 0 0 11px; }
.tr { display: grid; grid-template-columns: 32.500px 97.700px 137px 76px 64.500px 48px 48.100px 161.400px 120.700px 112.800px 1fr; align-items: center; color: #333; font-size: 10.700px; white-space: nowrap; }
.th { height: 34.500px; background: linear-gradient(#ebebeb, #dcdcdc); border-bottom: 1px solid #bbb; }
.th span { display: flex; align-items: center; justify-content: space-between; border-right: 1px solid #bbb; padding: 0 6px 0 9px; height: 15px; }
.th span:last-child { border: 0; }
.th span svg { width: 6px; height: 4px; color: #999; }
.th span:nth-child(2) svg { color: #444; }
.th span:nth-child(5), .th span:nth-child(10) { padding-right: 4px; }
.td { height: 21.500px; background: #eaf2fe; border-bottom: 1px solid #ccc; color: #111; }
.td span { display: flex; align-items: center; padding-left: 8.500px; gap: 3px; }
.cb { width: 15px; height: 14px; border: 1px solid #ccc; border-radius: 3px; background: #fff; display: grid; place-items: center; flex: none; }
.cb::after { content: ""; width: 10px; height: 10px; background: #1d6ac0; border-radius: 2px; }
.detail { margin-top: 219.500px; border-top: 1px solid #bbb; height: 147px; }
.grip { display: flex; justify-content: center; gap: 4px; height: 6px; padding-top: 2px; }
.grip i { width: 4px; height: 4px; border-radius: 50%; background: #ccc; }
.dmain { display: flex; height: 126px; }
.dcol { width: 1019px; overflow: hidden; }
.dtitle { height: 33px; display: flex; align-items: center; gap: 7px; padding: 0 9px 14px 5.500px; font-size: 11px; }
.dtitle b { margin-right: auto; }
.dtitle i { width: 12px; height: 11px; border: 1px solid #444; }
.dtitle .w1 { background: linear-gradient(#444 7px, #fff 7px); }
.dtitle .w2 { background: linear-gradient(#444 4px, #fff 4px); }
.dtitle .w3 { background: linear-gradient(#444 2px, #fff 2px); }
.tabs { display: flex; gap: 4.800px; padding-left: 4.500px; border-bottom: 1px solid #bbb; height: 24px; }
.tabs span { border: 1px solid #bbb; border-bottom: 0; background: linear-gradient(#ececec, #dcdcdc); height: 23px; padding: 2px 10px 0; }
.tabs span.on { background: #fff; border-top: 2px solid #f8991d; height: 24px; padding-top: 1px; }
.info-grid { display: grid; grid-template-columns: 621px 398px; grid-template-rows: 57px 20px; }
.ig { display: flex; align-items: flex-start; gap: 12px; }
.ig .info { margin-top: 3px; }
.ig.l { padding: 25px 0 0 138px; }
.ig.l > span { margin: 3px 0 0 17px; }
.ig.r { padding: 18px 0 0 0; }
.ig.r .az { line-height: 17px; margin-left: 16px; }
.ig.l2 { padding: 9px 0 0 138px; }
.ig.r2 { padding: 5px 0 0 15px; }
.inner { height: 126px; }
.inner i { height: 17px; }
.hbar { height: 13px; background: #f1f1f1; display: flex; align-items: center; gap: 4px; padding-left: 3px; }
.hbar svg { width: 6px; height: 6px; }
.hbar .hr { transform: scaleX(-1); margin: 0 14px 0 auto; }
.hbar i { width: 946px; height: 11px; background: #bdbdbd; }
.outer { height: 505.500px; }
.outer i { height: 400px; margin-top: 78px; }
.marks { position: absolute; left: 0; top: 0; }
.bx { fill: none; stroke: #ed1c24; stroke-width: 3.200; vector-effect: non-scaling-stroke; }
.pen { fill: none; stroke: #00a2e8; stroke-width: 2; vector-effect: non-scaling-stroke; stroke-linecap: round; stroke-linejoin: round; }
```
FILE: app.js
```js
// Chart axis: labels at their heights, and one rule across the plot for each.
const points = s => s.split(',').map(p => p.split(':'));
const labels = s => points(s).map(([t, y]) => `<text class="yl" x="24" y="${+y + 3.5}">${t}</text>`).join('');
const rules = s => points(s).map(([, y]) => `M28 ${y}H208`).join('');

// Expand <div data-use="name"> placeholders from the matching <template>.
let slot;
while ((slot = document.querySelector('[data-use]'))) {
  const d = { ...slot.dataset };
  if (d.ticks) {
    d.grid = rules(d.ticks);
    d.ticks = labels(d.ticks);
  }
  slot.outerHTML = document.getElementById(d.use).innerHTML
    .replace(/\{\{(\w+)\}\}/g, (_, k) => d[k] || '');
}
document.querySelectorAll('template').forEach(t => t.remove());

// Set each label to its width by adjusting the tracking.
document.querySelectorAll('[data-w]').forEach(el => {
  const want = parseFloat(el.dataset.w);
  if (!want) return;
  const have = el.getBoundingClientRect().width;
  const n = el.textContent.length;
  el.style.letterSpacing = ((want - have) / Math.max(1, n - 1)).toFixed(3) + 'px';
  el.style.width = want + 'px';
});
```
